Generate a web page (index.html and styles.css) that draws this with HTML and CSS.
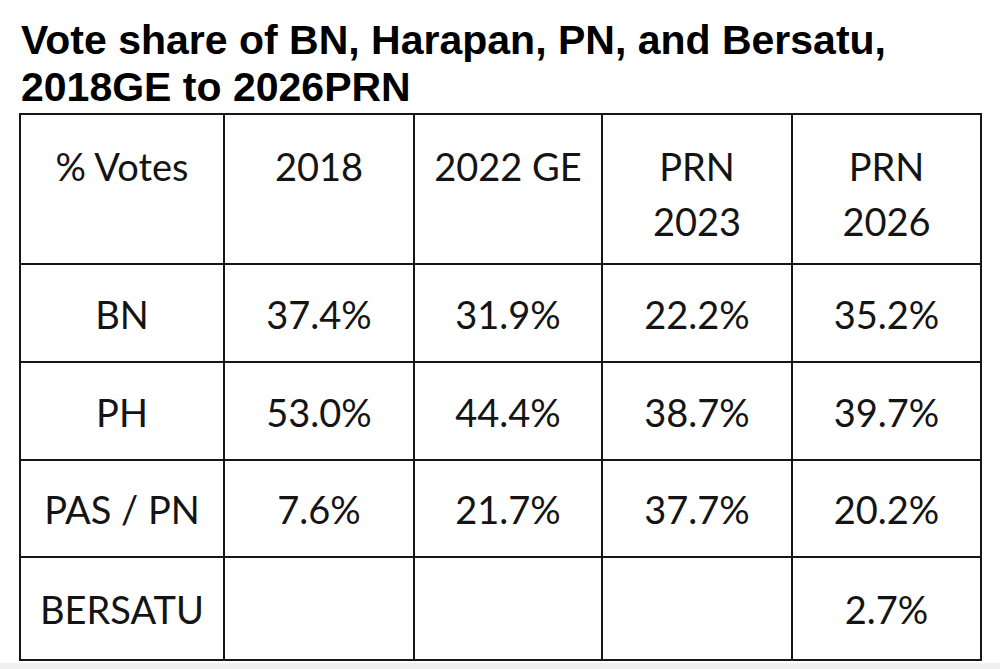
FILE: index.html
```html
<!DOCTYPE html>
<html lang="en">
<head>
<meta charset="utf-8">
<title>Vote share of BN, Harapan, PN, and Bersatu</title>
<link rel="stylesheet" href="styles.css">
</head>
<body>
<div class="page">
  <h1 class="title">Vote share of BN, Harapan, PN, and Bersatu,<br>2018GE to 2026PRN</h1>
  <div class="table">
    <div class="cell head">% Votes</div>
    <div class="cell head">2018</div>
    <div class="cell head">2022 GE</div>
    <div class="cell head">PRN<br>2023</div>
    <div class="cell head">PRN<br>2026</div>

    <div class="cell">BN</div>
    <div class="cell">37.4%</div>
    <div class="cell">31.9%</div>
    <div class="cell">22.2%</div>
    <div class="cell">35.2%</div>

    <div class="cell">PH</div>
    <div class="cell">53.0%</div>
    <div class="cell">44.4%</div>
    <div class="cell">38.7%</div>
    <div class="cell">39.7%</div>

    <div class="cell">PAS / PN</div>
    <div class="cell">7.6%</div>
    <div class="cell">21.7%</div>
    <div class="cell">37.7%</div>
    <div class="cell">20.2%</div>

    <div class="cell">BERSATU</div>
    <div class="cell"></div>
    <div class="cell"></div>
    <div class="cell"></div>
    <div class="cell">2.7%</div>
  </div>
</div>
<div class="strip"></div>
</body>
</html>
```

FILE: styles.css
```css
html, body {
  margin: 0;
  padding: 0;
  background: #ffffff;
}

body {
  width: 1000px;
  height: 669px;
  overflow: hidden;
  display: flex;
  flex-direction: column;
}

.page {
  flex: 1;
  padding: 17px 0 0 19px;
}

.title {
  margin: 0 0 2px 2px;
  font-family: "Liberation Sans", Arial, sans-serif;
  font-weight: 700;
  font-size: 41px;
  line-height: 47px;
  color: #000000;
}

.table {
  display: grid;
  grid-template-columns: 202px 188px 186px 188px 187px;
  grid-template-rows: 148px 96px 96px 95px 101px;
  gap: 2px;
  padding: 2px;
  width: max-content;
  background: #161616;
}

.cell {
  background: #ffffff;
  display: flex;
  align-items: center;
  justify-content: center;
  text-align: center;
  padding-top: 2px;
  box-sizing: border-box;
  font-family: Lato, "Open Sans", sans-serif;
  font-size: 38px;
  line-height: 55px;
  color: #141414;
}

.cell.head {
  align-items: flex-start;
  padding-top: 24px;
}

.strip {
  height: 6px;
  background: #f0f0f0;
}
```
